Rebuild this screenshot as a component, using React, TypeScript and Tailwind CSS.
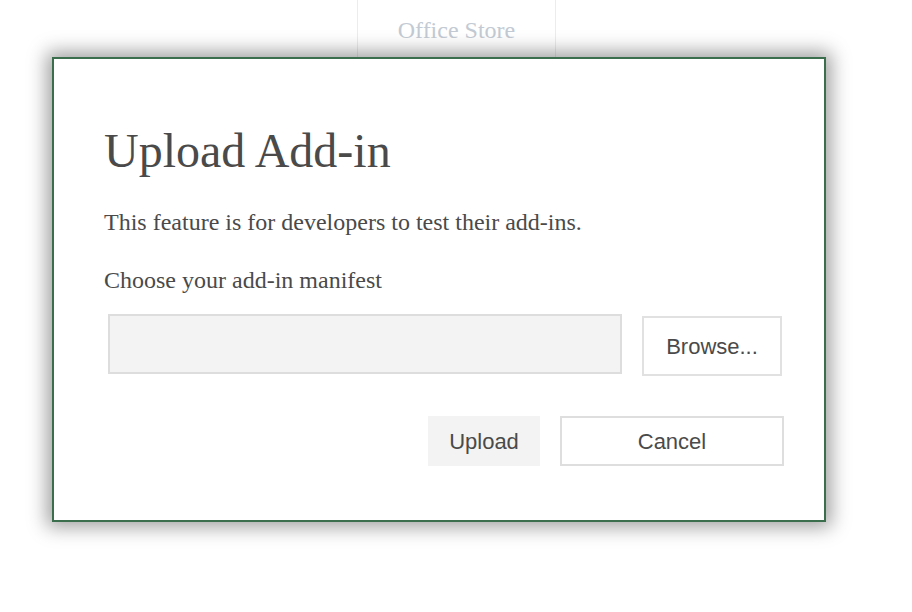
import React from "react";

export default function App() {
  const serif = { fontFamily: '"Liberation Serif", "Times New Roman", serif' };
  const sans = { fontFamily: '"Liberation Sans", Arial, sans-serif' };
  return (
    <div className="w-[912px] h-[612px] bg-white overflow-hidden relative">
      <div className="h-[57px] flex">
        <div className="ml-[357px] w-[199px] h-full border-l border-r border-[#ececec] flex items-center justify-center">
          <span className="text-[24px] text-[#c3cad3] pt-[3px]" style={serif}>Office Store</span>
        </div>
      </div>
      <div className="ml-[52px] w-[774px] h-[465px] bg-white border-2 border-[#3b6e4c] shadow-[0_0_18px_5px_rgba(0,0,0,0.38)] relative z-10 pl-[50px] pr-[40px] pt-[64px]">
        <h1 className="text-[48px] leading-[56px] text-[#4a4a4a]" style={serif}>Upload Add-in</h1>
        <p className="mt-[29px] text-[24px] leading-[28px] text-[#4a4a4a]" style={serif}>
          This feature is for developers to test their add-ins.
        </p>
        <p className="mt-[30px] text-[24px] leading-[28px] text-[#4a4a4a]" style={serif}>
          Choose your add-in manifest
        </p>
        <div className="mt-[20px] ml-[4px] flex items-start">
          <div className="w-[514px] h-[60px] bg-[#f3f3f3] border-2 border-[#dddddd]" />
          <button className="ml-[20px] mt-[2px] w-[140px] h-[60px] bg-white border-2 border-[#e1e1e1] text-[22px] text-[#4a4a4a]" style={sans}>
            Browse...
          </button>
        </div>
        <div className="mt-[40px] flex justify-end">
          <button className="w-[112px] h-[50px] bg-[#f3f3f3] text-[22px] text-[#4a4a4a]" style={sans}>
            Upload
          </button>
          <button className="ml-[20px] w-[224px] h-[50px] bg-white border-2 border-[#dedede] text-[22px] text-[#4a4a4a]" style={sans}>
            Cancel
          </button>
        </div>
      </div>
    </div>
  );
}
